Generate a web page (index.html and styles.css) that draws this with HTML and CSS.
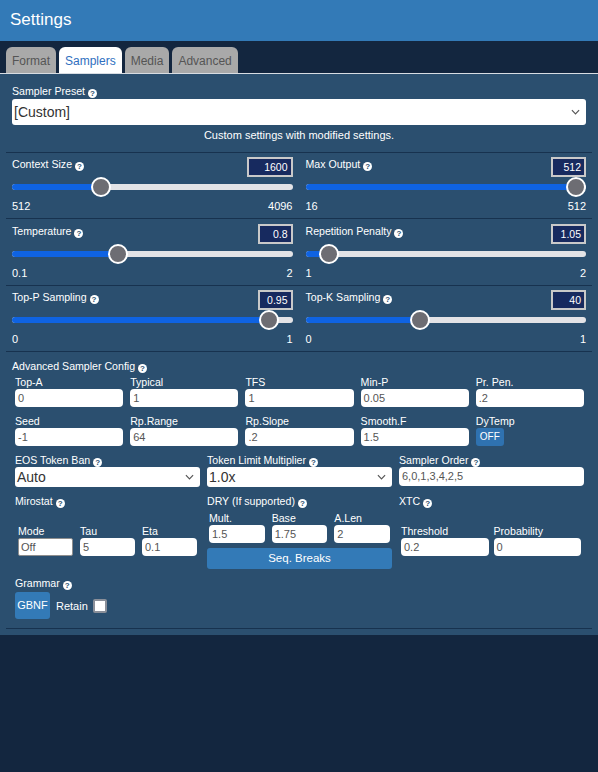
FILE: index.html
```html
<!DOCTYPE html>
<html>
<head>
<meta charset="utf-8">
<link rel="stylesheet" href="styles.css">
</head>
<body>
<div class="header">Settings</div>
<div class="tabs">
  <div class="tab">Format</div>
  <div class="tab active">Samplers</div>
  <div class="tab">Media</div>
  <div class="tab">Advanced</div>
</div>
<div class="panel">
  <div class="section preset">
    <div class="lbl">Sampler Preset <span class="help">?</span></div>
    <div class="select big"><span>[Custom]</span><svg viewBox="0 0 10 6"><polyline points="1,1 5,5 9,1" fill="none" stroke="#555" stroke-width="1.3"/></svg></div>
    <div class="desc">Custom settings with modified settings.</div>
  </div>

  <div class="section srow">
    <div class="sl">
      <div class="sl-head"><span class="lbl">Context Size <span class="help">?</span></span><span class="val wide">1600</span></div>
      <div class="track" style="--p:0.3036"><div class="rail"></div><div class="fill"></div><div class="thumb"></div></div>
      <div class="minmax"><span>512</span><span>4096</span></div>
    </div>
    <div class="sl">
      <div class="sl-head"><span class="lbl">Max Output <span class="help">?</span></span><span class="val">512</span></div>
      <div class="track" style="--p:1"><div class="rail"></div><div class="fill"></div><div class="thumb"></div></div>
      <div class="minmax"><span>16</span><span>512</span></div>
    </div>
  </div>

  <div class="section srow mid">
    <div class="sl">
      <div class="sl-head"><span class="lbl">Temperature <span class="help">?</span></span><span class="val">0.8</span></div>
      <div class="track" style="--p:0.3684"><div class="rail"></div><div class="fill"></div><div class="thumb"></div></div>
      <div class="minmax"><span>0.1</span><span>2</span></div>
    </div>
    <div class="sl">
      <div class="sl-head"><span class="lbl">Repetition Penalty <span class="help">?</span></span><span class="val">1.05</span></div>
      <div class="track" style="--p:0.05"><div class="rail"></div><div class="fill"></div><div class="thumb"></div></div>
      <div class="minmax"><span>1</span><span>2</span></div>
    </div>
  </div>

  <div class="section srow">
    <div class="sl">
      <div class="sl-head"><span class="lbl">Top-P Sampling <span class="help">?</span></span><span class="val">0.95</span></div>
      <div class="track" style="--p:0.95"><div class="rail"></div><div class="fill"></div><div class="thumb"></div></div>
      <div class="minmax"><span>0</span><span>1</span></div>
    </div>
    <div class="sl">
      <div class="sl-head"><span class="lbl">Top-K Sampling <span class="help">?</span></span><span class="val">40</span></div>
      <div class="track" style="--p:0.4"><div class="rail"></div><div class="fill"></div><div class="thumb"></div></div>
      <div class="minmax"><span>0</span><span>1</span></div>
    </div>
  </div>

  <div class="section adv">
    <div class="lbl">Advanced Sampler Config <span class="help">?</span></div>
    <div class="grid5">
      <div class="field"><div class="flbl">Top-A</div><div class="inp">0</div></div>
      <div class="field"><div class="flbl">Typical</div><div class="inp">1</div></div>
      <div class="field"><div class="flbl">TFS</div><div class="inp">1</div></div>
      <div class="field"><div class="flbl">Min-P</div><div class="inp">0.05</div></div>
      <div class="field"><div class="flbl">Pr. Pen.</div><div class="inp">.2</div></div>
      <div class="field"><div class="flbl">Seed</div><div class="inp">-1</div></div>
      <div class="field"><div class="flbl">Rp.Range</div><div class="inp">64</div></div>
      <div class="field"><div class="flbl">Rp.Slope</div><div class="inp">.2</div></div>
      <div class="field"><div class="flbl">Smooth.F</div><div class="inp">1.5</div></div>
      <div class="field"><div class="flbl">DyTemp</div><div class="btn off">OFF</div></div>
    </div>

    <div class="grid3">
      <div class="field"><div class="lbl">EOS Token Ban <span class="help">?</span></div><div class="select mid"><span>Auto</span><svg viewBox="0 0 10 6"><polyline points="1,1 5,5 9,1" fill="none" stroke="#555" stroke-width="1.3"/></svg></div></div>
      <div class="field"><div class="lbl">Token Limit Multiplier <span class="help">?</span></div><div class="select mid"><span>1.0x</span><svg viewBox="0 0 10 6"><polyline points="1,1 5,5 9,1" fill="none" stroke="#555" stroke-width="1.3"/></svg></div></div>
      <div class="field"><div class="lbl">Sampler Order <span class="help">?</span></div><div class="inp order">6,0,1,3,4,2,5</div></div>
    </div>

    <div class="grid3 groups">
      <div class="lbl">Mirostat <span class="help">?</span></div>
      <div class="lbl">DRY (If supported) <span class="help">?</span></div>
      <div class="lbl">XTC <span class="help">?</span></div>
      <div class="sub miro">
        <div class="field"><div class="flbl">Mode</div><div class="inp mode">Off</div></div>
        <div class="field"><div class="flbl">Tau</div><div class="inp">5</div></div>
        <div class="field"><div class="flbl">Eta</div><div class="inp">0.1</div></div>
      </div>
      <div class="dry">
        <div class="sub drysub">
          <div class="field"><div class="flbl">Mult.</div><div class="inp">1.5</div></div>
          <div class="field"><div class="flbl">Base</div><div class="inp">1.75</div></div>
          <div class="field"><div class="flbl">A.Len</div><div class="inp">2</div></div>
        </div>
        <div class="btn seq">Seq. Breaks</div>
      </div>
      <div class="sub xtc">
        <div class="field"><div class="flbl">Threshold</div><div class="inp">0.2</div></div>
        <div class="field"><div class="flbl">Probability</div><div class="inp">0</div></div>
      </div>
    </div>

    <div class="grammar">
      <div class="lbl">Grammar <span class="help">?</span></div>
      <div class="grow">
        <div class="btn gbnf">GBNF</div>
        <span class="retain">Retain</span>
        <span class="check"></span>
      </div>
    </div>
  </div>
</div>
</body>
</html>
```
FILE: styles.css
```css
* { box-sizing: border-box; }
body {
  margin: 0;
  background: #13263f;
  font-family: "Liberation Sans", Arial, sans-serif;
  color: #fff;
}
.header {
  height: 41px;
  background: #337ab7;
  padding: 0 10px;
  font-size: 17px;
  line-height: 39px;
}
.tabs {
  display: flex;
  gap: 3px;
  padding: 6px 6px 0;
  border-bottom: 1px solid #d8dde3;
}
.tab {
  height: 26px;
  padding: 0 6px;
  background: #a9a9a9;
  color: #555;
  font-size: 12px;
  line-height: 28px;
  border-radius: 6px 6px 0 0;
}
.tab.active { background: #fff; color: #2f6fc0; }
.panel {
  background: #2b4f6f;
  padding: 0 6px 6px;
}
.section {
  padding: 0 6px;
  border-bottom: 1px solid #17324f;
}
.lbl {
  font-size: 10.6px;
  line-height: 14px;
  white-space: nowrap;
}
.help {
  display: inline-block;
  width: 9px;
  height: 9px;
  border-radius: 50%;
  background: #fff;
  color: #2b4f6f;
  font-size: 8px;
  font-weight: bold;
  line-height: 9px;
  text-align: center;
  vertical-align: -1px;
}
.preset { padding-top: 10px; padding-bottom: 9px; }
.select {
  display: flex;
  align-items: center;
  justify-content: space-between;
  background: #fff;
  color: #333;
  border-radius: 3px;
  padding: 0 6px 0 2px;
}
.select svg { width: 9px; height: 6px; }
.select.big { height: 26px; font-size: 14px; margin-top: 1px; }
.select.mid { height: 20px; font-size: 14px; }
.desc {
  margin-top: 2px;
  font-size: 11px;
  line-height: 16px;
  text-align: center;
}
.srow {
  display: grid;
  grid-template-columns: 1fr 1fr;
  column-gap: 13px;
  padding-top: 4px;
  padding-bottom: 5px;
}
.srow.mid { padding-top: 5px; }
.sl-head {
  display: flex;
  justify-content: space-between;
  align-items: flex-start;
  height: 20px;
}
.val {
  height: 20px;
  width: 35px;
  padding: 0 3px;
  border: 2px solid #c9c9c9;
  background: #172a5f;
  color: #fff;
  font-size: 10.5px;
  line-height: 16px;
  text-align: right;
}
.val.wide { width: 46px; }
.track { position: relative; height: 20px; }
.rail {
  position: absolute;
  left: 0; right: 0;
  top: 7px;
  height: 6px;
  background: #e3e3e6;
  border-radius: 3px;
}
.fill {
  position: absolute;
  left: 0;
  top: 7px;
  height: 6px;
  border-radius: 3px;
  background: #0f63e2;
  width: calc(10px + var(--p) * (100% - 20px));
}
.thumb {
  position: absolute;
  top: 0;
  left: calc(var(--p) * (100% - 20px));
  width: 20px;
  height: 20px;
  border-radius: 50%;
  background: #6d6d73;
  border: 2px solid #fff;
}
.minmax {
  display: flex;
  justify-content: space-between;
  margin-top: 2px;
  font-size: 11px;
  line-height: 14px;
}
.adv { padding-top: 7px; padding-bottom: 9px; }
.flbl { font-size: 10.6px; line-height: 14px; }
.inp {
  height: 18px;
  background: #fff;
  border-radius: 4px;
  color: #555;
  font-size: 11px;
  line-height: 18px;
  padding: 0 3px;
  white-space: nowrap;
}
.inp.order { height: 19px; line-height: 19px; }
.inp.mode {
  border: 1px solid #8e8e8e;
  border-radius: 2px;
  line-height: 16px;
  padding: 0 2px;
}
.grid5 {
  display: grid;
  grid-template-columns: repeat(5, 1fr);
  gap: 7px;
  padding: 0 2px 0 3px;
  margin-top: 2px;
}
.grid3 {
  display: grid;
  grid-template-columns: repeat(3, 1fr);
  column-gap: 7px;
  padding: 0 2px 0 3px;
  margin-top: 7px;
}
.groups {
  margin-top: 7px;
  row-gap: 3px;
  align-items: center;
}
.sub { display: grid; }
.miro { grid-template-columns: repeat(3, 1fr); column-gap: 7px; padding: 0 3px; }
.drysub { grid-template-columns: repeat(3, 1fr); column-gap: 7px; padding: 0 2px; }
.xtc { grid-template-columns: 1fr 1fr; column-gap: 5px; padding: 0 3px 0 2px; }
.btn {
  background: #337ab7;
  color: #fff;
  border-radius: 3px;
  text-align: center;
}
.btn.off {
  width: 28px;
  height: 18px;
  font-size: 10px;
  line-height: 18px;
  background: #2f72b0;
}
.btn.seq {
  margin-top: 5px;
  height: 21px;
  font-size: 11.5px;
  line-height: 21px;
}
.grammar { margin-top: 7px; padding-left: 3px; }
.grow {
  display: flex;
  align-items: center;
  margin-top: 2px;
}
.btn.gbnf {
  width: 35px;
  height: 27px;
  font-size: 11px;
  line-height: 27px;
}
.retain { font-size: 11px; margin-left: 6px; }
.check {
  width: 14px;
  height: 14px;
  margin-left: 5px;
  background: #fff;
  border: 2px solid #8a8f99;
  border-radius: 2px;
}
```
